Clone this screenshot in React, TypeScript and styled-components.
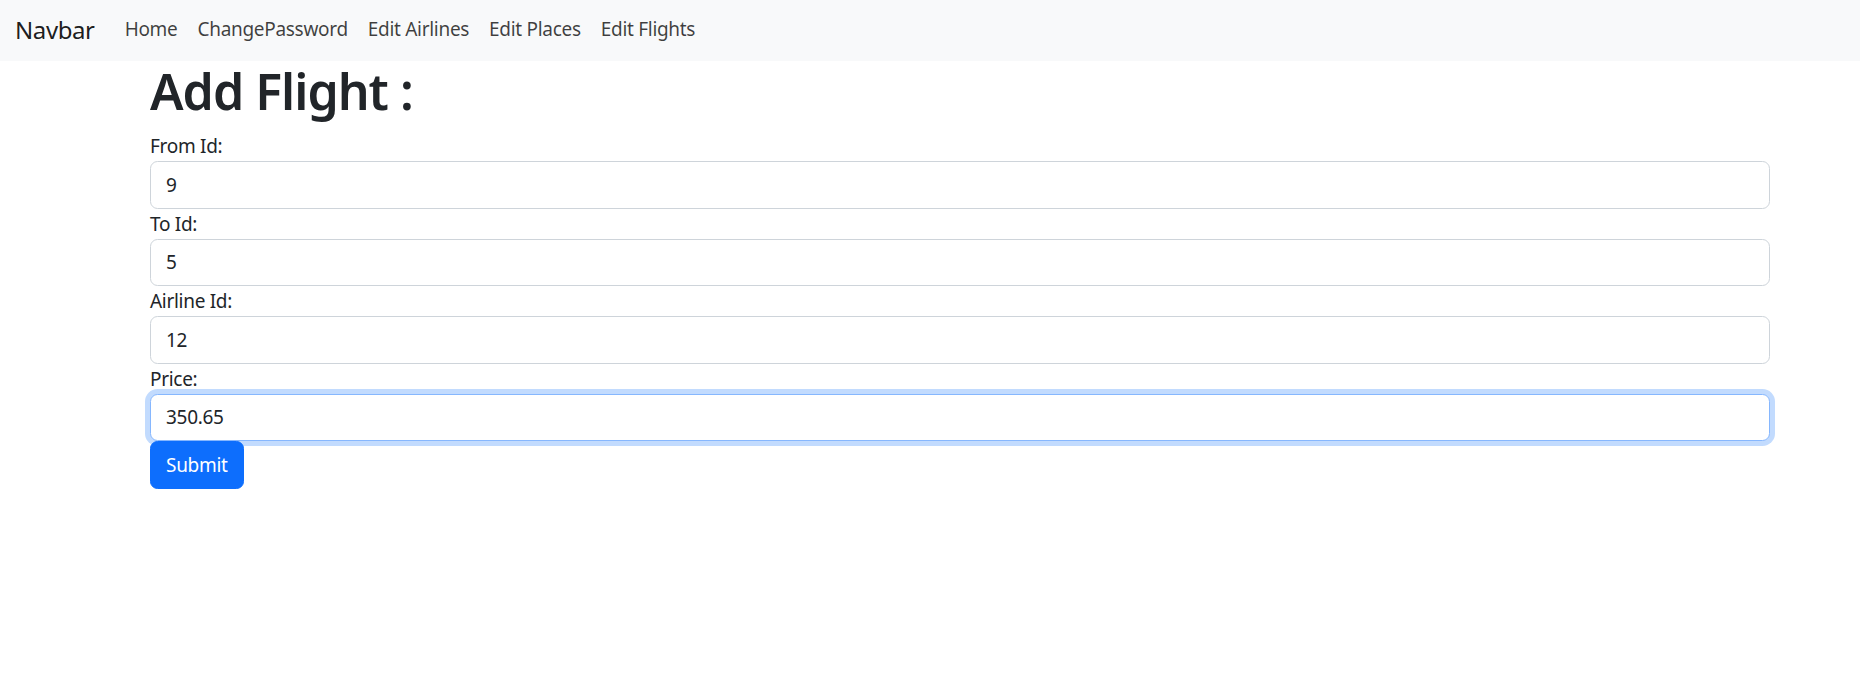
import styled, { createGlobalStyle } from "styled-components";

const GlobalStyle = createGlobalStyle`
    body {
        margin: 0;
        font-family: "Noto Sans", "Open Sans", sans-serif;
        color: #212529;
        background: #fff;
    }
    * { box-sizing: border-box; }
`

const Navbar = styled.nav`
    display: flex;
    align-items: center;
    height: 61px;
    padding: 0 15px 3px;
    background: #f8f9fa;
`

const Brand = styled.a`
    font-size: 24px;
    letter-spacing: -0.4px;
    color: rgba(0, 0, 0, 0.9);
    text-decoration: none;
    margin-right: 20px;
`

const NavLinks = styled.div`
    display: flex;
`

const NavLink = styled.a`
    font-size: 19px;
    letter-spacing: -0.3px;
    padding: 0 10px;
    color: rgba(0, 0, 0, 0.75);
    text-decoration: none;
`

const Container = styled.main`
    margin-left: 150px;
    width: 1620px;
`

const Title = styled.h1`
    font-size: 50px;
    font-weight: 600;
    letter-spacing: -1px;
    line-height: 1.2;
    margin: 0 0 10px;
`

const Field = styled.div`
    display: flex;
    flex-direction: column;
`

const Label = styled.label`
    font-size: 19px;
    letter-spacing: -0.3px;
    line-height: 30px;
`

const Input = styled.input<{ $focused?: boolean }>`
    display: block;
    width: 100%;
    height: 47.5px;
    padding: 0 15px;
    font-family: inherit;
    font-size: 19px;
    letter-spacing: -0.3px;
    color: #212529;
    border: 1.25px solid ${(props) => (props.$focused ? "#86b7fe" : "#ced4da")};
    border-radius: 7.5px;
    outline: none;
    box-shadow: ${(props) => (props.$focused ? "0 0 0 5px rgba(13, 110, 253, 0.25)" : "none")};
`

const SubmitButton = styled.button`
    height: 47.5px;
    padding: 0 15px;
    font-family: inherit;
    font-size: 19px;
    letter-spacing: -0.3px;
    color: #fff;
    background: #0d6efd;
    border: 1.25px solid #0d6efd;
    border-radius: 7.5px;
`

const fields = [
    { label: "From Id:", value: "9" },
    { label: "To Id:", value: "5" },
    { label: "Airline Id:", value: "12" },
    { label: "Price:", value: "350.65", focused: true },
]

export default function App() {
    return (
        <>
            <GlobalStyle />
            <Navbar>
                <Brand href="#">Navbar</Brand>
                <NavLinks>
                    {["Home", "ChangePassword", "Edit Airlines", "Edit Places", "Edit Flights"].map((l) => (
                        <NavLink key={l} href="#">{l}</NavLink>
                    ))}
                </NavLinks>
            </Navbar>
            <Container>
                <Title>Add Flight :</Title>
                <form onSubmit={(e) => e.preventDefault()}>
                    {fields.map((f) => (
                        <Field key={f.label}>
                            <Label htmlFor={f.label}>{f.label}</Label>
                            <Input id={f.label} defaultValue={f.value} $focused={f.focused} />
                        </Field>
                    ))}
                    <SubmitButton type="submit">Submit</SubmitButton>
                </form>
            </Container>
        </>
    )
}
